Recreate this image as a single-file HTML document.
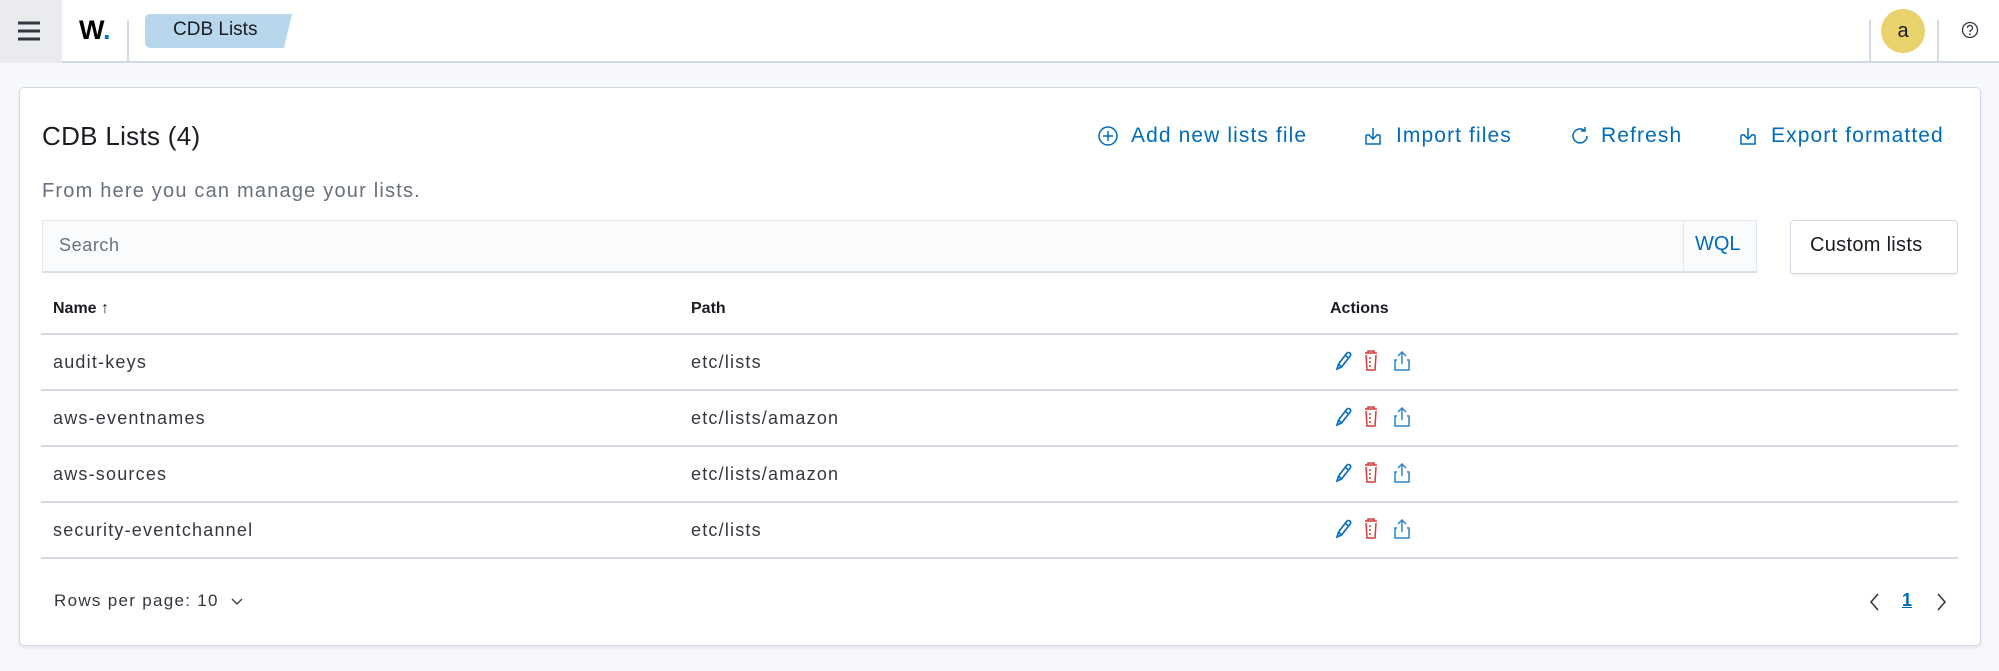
<!DOCTYPE html>
<html><head><meta charset="utf-8"><style>
*{box-sizing:border-box;margin:0;padding:0}
body{width:1999px;height:671px;background:#f7f8fc;font-family:"Liberation Sans",sans-serif;position:relative;overflow:hidden;color:#343741}
.a{position:absolute}
.hdr{left:0;top:0;width:1999px;height:63px;background:#fff;border-bottom:2px solid #d3dae6}
.lnk{color:#006bb8;font-size:21px;white-space:nowrap;letter-spacing:1.1px}
.row{left:41px;width:1917px;height:56px;border-bottom:2px solid #d3dae6}
.cell{position:absolute;top:17px;font-size:18px;color:#343741;letter-spacing:1.2px}
</style></head><body>
<div class="a hdr"></div>
<div class="a" style="left:0;top:0;width:62px;height:63px;background:#e9ebef"></div>
<svg class="a" style="left:17px;top:21px" width="26" height="20"><path d="M1 2h22M1 10h22M1 18h22" stroke="#343741" stroke-width="3"/></svg>
<div class="a" style="left:79px;top:15px;font-size:27px;font-weight:bold;color:#000">W<span style="color:#0077cc">.</span></div>
<div class="a" style="left:127px;top:20px;width:2px;height:42px;background:#d3dae6"></div>
<svg class="a" style="left:145px;top:14px" width="150" height="34"><path d="M6 0H147L139 34H6Q0 34 0 28V6Q0 0 6 0Z" fill="#b9d7ec"/></svg>
<div class="a" style="left:173px;top:19px;font-size:19px;color:#1a1c21">CDB Lists</div>
<div class="a" style="left:1869px;top:20px;width:2px;height:43px;background:#d3dae6"></div>
<div class="a" style="left:1937px;top:20px;width:2px;height:43px;background:#d3dae6"></div>
<div class="a" style="left:1881px;top:9px;width:44px;height:44px;border-radius:50%;background:#e9d16c;text-align:center;line-height:44px;font-size:20px;color:#1a1c21">a</div>
<svg class="a" style="left:1961px;top:21px" width="18" height="18"><circle cx="9" cy="9" r="7.5" fill="none" stroke="#343741" stroke-width="1.3"/><path d="M6.5 7a2.5 2.5 0 1 1 3.5 2.2c-.8.4-1 .9-1 1.8" fill="none" stroke="#343741" stroke-width="1.3"/><circle cx="9" cy="13.3" r=".9" fill="#343741"/></svg>

<div class="a" style="left:19px;top:87px;width:1962px;height:559px;background:#fff;border:1px solid #d3dae6;border-radius:5px;box-shadow:0 2px 3px rgba(0,0,0,.08)"></div>
<div class="a" style="left:42px;top:121px;font-size:26px;color:#1a1c21;letter-spacing:.3px">CDB Lists (4)</div>
<div class="a" style="left:42px;top:180px;font-size:20px;color:#69707d;letter-spacing:1.2px">From here you can manage your lists.</div>

<svg class="a" style="left:1097px;top:125px" width="22" height="22"><circle cx="11" cy="11" r="9" fill="none" stroke="#006bb8" stroke-width="1.5"/><path d="M11 6v10M6 11h10" stroke="#006bb8" stroke-width="1.5"/></svg>
<div class="a lnk" style="left:1131px;top:124px">Add new lists file</div>
<svg class="a" style="left:1362px;top:125px" width="22" height="22"><path d="M4 10v9h14v-9M8 10h-4M18 10h-4M11 3v11M7 10l4 4 4-4" fill="none" stroke="#006bb8" stroke-width="1.5"/></svg>
<div class="a lnk" style="left:1396px;top:124px">Import files</div>
<svg class="a" style="left:1569px;top:125px" width="22" height="22"><path d="M16 6a7 7 0 1 0 2 5M16 2v4h-4" fill="none" stroke="#006bb8" stroke-width="1.5"/></svg>
<div class="a lnk" style="left:1601px;top:124px">Refresh</div>
<svg class="a" style="left:1737px;top:125px" width="22" height="22"><path d="M4 10v9h14v-9M8 10h-4M18 10h-4M11 3v11M7 10l4 4 4-4" fill="none" stroke="#006bb8" stroke-width="1.5"/></svg>
<div class="a lnk" style="left:1771px;top:124px">Export formatted</div>

<div class="a" style="left:42px;top:220px;width:1715px;height:53px;background:#fafbfd;border:1px solid #e3e8f0;border-bottom:2px solid #d9dee8"></div>
<div class="a" style="left:59px;top:235px;font-size:18px;color:#69707d;letter-spacing:.6px">Search</div>
<div class="a" style="left:1683px;top:221px;width:1px;height:51px;background:#e3e8f0"></div>
<div class="a" style="left:1695px;top:233px;font-size:20px;color:#006bb8">WQL</div>
<div class="a" style="left:1790px;top:220px;width:168px;height:54px;background:#fff;border:1px solid #d3dae6;border-radius:4px;box-shadow:0 2px 2px rgba(0,0,0,.06)"></div>
<div class="a" style="left:1810px;top:234px;font-size:20px;color:#1a1c21;letter-spacing:.3px">Custom lists</div>

<div class="a row" style="top:279px"><div class="cell" style="left:12px;top:21px;font-size:16px;font-weight:bold;color:#1a1c21;letter-spacing:0">Name <span style="font-weight:normal">&#8593;</span></div><div class="cell" style="left:650px;top:21px;font-size:16px;font-weight:bold;color:#1a1c21;letter-spacing:0">Path</div><div class="cell" style="left:1289px;top:21px;font-size:16px;font-weight:bold;color:#1a1c21;letter-spacing:0">Actions</div></div>

<div class="a row" style="top:335px"><div class="cell" style="left:12px">audit-keys</div><div class="cell" style="left:650px">etc/lists</div></div>
<div class="a row" style="top:391px"><div class="cell" style="left:12px">aws-eventnames</div><div class="cell" style="left:650px">etc/lists/amazon</div></div>
<div class="a row" style="top:447px"><div class="cell" style="left:12px">aws-sources</div><div class="cell" style="left:650px">etc/lists/amazon</div></div>
<div class="a row" style="top:503px"><div class="cell" style="left:12px">security-eventchannel</div><div class="cell" style="left:650px">etc/lists</div></div>

<svg class="a" style="left:1334px;top:349px" width="90" height="230">
<defs><g id="ic">
<path d="M3 20l1.5-5L13 4a2.2 2.2 0 0 1 3.2 3L7.5 18zM4.5 15l3 3M11 6l3.5 3" fill="none" stroke="#0a6fc2" stroke-width="1.7"/>
<path d="M31 4h12M34 4V2h6v2M32 6l1 15h8l1-15M35 9h2M35 13h2M35 17h2" fill="none" stroke="#d93a3a" stroke-width="1.5"/>
<path d="M63 11h-2v10h14v-10h-2M68 3v12M64 7l4-4 4 4" fill="none" stroke="#2f86c8" stroke-width="1.5"/>
</g></defs>
<use href="#ic" y="0"/><use href="#ic" y="56"/><use href="#ic" y="112"/><use href="#ic" y="168"/>
</svg>

<div class="a" style="left:54px;top:591px;font-size:17px;color:#343741;letter-spacing:1.3px">Rows per page: 10</div>
<svg class="a" style="left:230px;top:597px" width="14" height="10"><path d="M2 2l5 5 5-5" fill="none" stroke="#343741" stroke-width="1.3"/></svg>
<svg class="a" style="left:1868px;top:592px" width="14" height="20"><path d="M10 2L3 10l7 8" fill="none" stroke="#343741" stroke-width="1.6"/></svg>
<div class="a" style="left:1902px;top:590px;font-size:18px;font-weight:bold;color:#006bb8;text-decoration:underline">1</div>
<svg class="a" style="left:1934px;top:592px" width="14" height="20"><path d="M4 2l7 8-7 8" fill="none" stroke="#343741" stroke-width="1.6"/></svg>
</body></html>
